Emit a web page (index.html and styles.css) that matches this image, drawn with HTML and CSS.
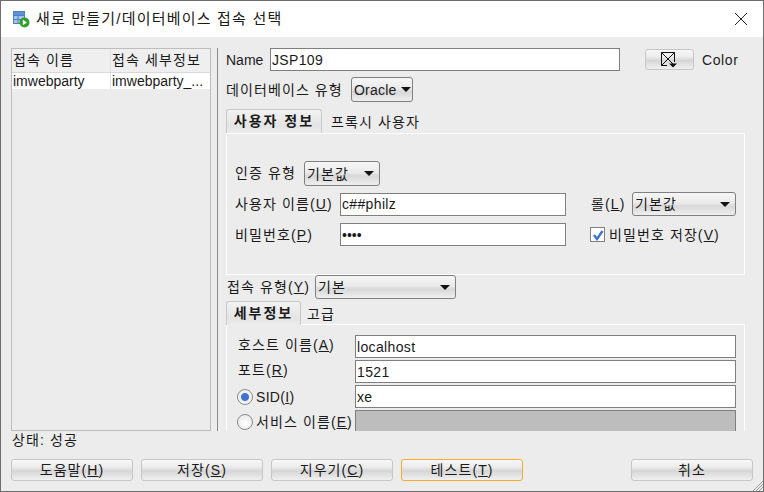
FILE: index.html
```html
<!DOCTYPE html>
<html lang="ko">
<head>
<meta charset="utf-8">
<title>새로 만들기/데이터베이스 접속 선택</title>
<link rel="stylesheet" href="styles.css">
</head>
<body>
<div class="win">
  <header class="title">
    <svg class="app-icon" width="17" height="17" viewBox="0 0 17 17">
      <rect x="0.5" y="0.5" width="11" height="12" fill="#a9c4ea" stroke="#4f7fc4"/>
      <path d="M1 4.5H11M1 8.5H11M5 4.5V12.5" stroke="#4f7fc4" fill="none"/>
      <rect x="1" y="1" width="10" height="3" fill="#5f8fd4"/>
      <circle cx="11.5" cy="11.5" r="5" fill="#2f9e2a"/>
      <path d="M9.8 8.8L14 11.5L9.8 14.2Z" fill="#fff"/>
    </svg>
    <span class="title-text">새로 만들기/데이터베이스 접속 선택</span>
    <svg class="close" width="14" height="14" viewBox="0 0 14 14"><path d="M1 1L13 13M13 1L1 13" stroke="#222" fill="none"/></svg>
  </header>

  <div class="main">
    <section class="list">
      <div class="list-head">
        <div class="cell k">접속 이름</div>
        <div class="cell k">접속 세부정보</div>
      </div>
      <div class="list-row">
        <div class="cell">imwebparty</div>
        <div class="cell">imwebparty_...</div>
      </div>
    </section>
    <div class="divider"></div>
    <section class="form">
      <div class="row row-name">
        <label class="lab lab-name">Name</label>
        <input class="field field-name" value="JSP109">
        <button class="btn btn-color">
          <svg width="18" height="18" viewBox="0 0 18 18"><path d="M0.5 1.5H13.5V11M6 14.5H0.5V1.5L13.5 14.5M13.5 1.5L0.5 14.5" stroke="#111" fill="none"/><path d="M8 12.5H16L12 16.5Z" fill="#111"/></svg>
        </button>
        <span class="lab lab-color">Color</span>
      </div>
      <div class="row row-type">
        <label class="lab k lab-type">데이터베이스 유형</label>
        <div class="sel sel-type"><span>Oracle</span><i class="arrow"></i></div>
      </div>
      <div class="tabs tabs-user">
        <div class="tab tab-user k">사용자 정보</div>
        <div class="tab-off k">프록시 사용자</div>
      </div>
      <div class="panel panel-user">
        <div class="row row-auth">
          <label class="lab k lab-auth">인증 유형</label>
          <div class="sel sel-auth"><span class="k">기본값</span><i class="arrow"></i></div>
        </div>
        <div class="row row-user">
          <label class="lab k lab-user">사용자 이름(<u>U</u>)</label>
          <input class="field field-user" value="c##philz">
          <label class="lab k lab-role">롤(<u>L</u>)</label>
          <div class="sel sel-role"><span class="k">기본값</span><i class="arrow"></i></div>
        </div>
        <div class="row row-pass">
          <label class="lab k lab-user">비밀번호(<u>P</u>)</label>
          <input class="field field-user field-pass" type="password" value="abcd">
          <span class="check">
            <svg width="12" height="12" viewBox="0 0 12 12"><path d="M2 6L5 10L10.5 2" stroke="#3f74cf" stroke-width="2.4" fill="none"/></svg>
          </span>
          <label class="lab k lab-save">비밀번호 저장(<u>V</u>)</label>
        </div>
      </div>
      <div class="row row-conn">
        <label class="lab k lab-conn">접속 유형(<u>Y</u>)</label>
        <div class="sel sel-conn"><span class="k">기본</span><i class="arrow"></i></div>
      </div>
      <div class="tabs tabs-detail">
        <div class="tab tab-detail k">세부정보</div>
        <div class="tab-off tab-off-adv k">고급</div>
      </div>
      <div class="panel panel-detail">
        <div class="row row-d">
          <label class="lab k lab-d">호스트 이름(<u>A</u>)</label>
          <input class="field field-d" value="localhost">
        </div>
        <div class="row row-d">
          <label class="lab k lab-d">포트(<u>R</u>)</label>
          <input class="field field-d" value="1521">
        </div>
        <div class="row row-d">
          <span class="radio radio-on"></span>
          <label class="lab lab-r lab-sid">SID(<u>I</u>)</label>
          <input class="field field-d" value="xe">
        </div>
        <div class="row row-d">
          <span class="radio"></span>
          <label class="lab k lab-r">서비스 이름(<u>E</u>)</label>
          <input class="field field-d field-off" disabled>
        </div>
      </div>
    </section>
  </div>

  <div class="status k">상태: 성공</div>

  <footer class="actions">
    <button class="btn btn-act k">도움말(<u>H</u>)</button>
    <button class="btn btn-act k">저장(<u>S</u>)</button>
    <button class="btn btn-act k">지우기(<u>C</u>)</button>
    <button class="btn btn-act btn-focus k">테스트(<u>T</u>)</button>
    <button class="btn btn-act btn-cancel k">취소</button>
  </footer>

  <svg class="grip" width="11" height="11" viewBox="0 0 11 11"><path d="M11 1L1 11M11 4L4 11M11 7L7 11" stroke="#9a9a9a" fill="none"/></svg>
</div>
</body>
</html>
```
FILE: styles.css
```css
* { box-sizing: border-box; }
html, body { margin: 0; padding: 0; }
body { width: 764px; height: 492px; overflow: hidden; font: 14px/16px "Liberation Sans", "Noto Sans CJK KR", sans-serif; color: #1a1a1a; }
u { text-decoration: underline; }
.k { letter-spacing: 1.1px; }

.win { position: relative; width: 764px; height: 492px; border: 1px solid #6e6e6e; background: #ececec; display: flex; flex-direction: column; overflow: hidden; }

.title { height: 36px; background: #fff; display: flex; align-items: center; padding-left: 12px; flex: none; }
.app-icon { flex: none; }
.title-text { margin-left: 6px; font-size: 15px; letter-spacing: 1.2px; color: #1a1a1a; }
.close { margin-left: auto; margin-right: 15px; }

.main { height: 394px; flex: none; display: flex; padding: 11px 0 0 10px; overflow: hidden; }

.list { width: 200px; height: 383px; border: 1px solid #bdbdbd; flex: none; }
.list-head { display: flex; height: 24px; border-bottom: 1px solid #d8d8d8; background: #efefef; }
.list-row { display: flex; height: 16px; background: #fff; }
.cell { width: 99px; padding-left: 1px; white-space: nowrap; overflow: hidden; border-right: 1px solid #e2e2e2; line-height: 16px; }
.list-head .cell { line-height: 23px; }
.cell:last-child { width: 99px; border-right: 0; }

.divider { width: 1px; height: 383px; margin-left: 6px; background: #8a8a8a; flex: none; }
.form { width: 528px; margin-left: 8px; flex: none; height: 383px; overflow: hidden; }

.row { display: flex; align-items: center; }
.lab { white-space: nowrap; flex: none; }

.field { height: 23px; border: 1px solid #7f7f7f; background: #fff; padding: 0 1px; font: 14px/16px "Liberation Sans", sans-serif; letter-spacing: 0.35px; color: #1a1a1a; border-radius: 0; outline: 0; flex: none; margin: 0; }
.field-off { background: #bdbdbd; }
.field-pass { letter-spacing: 0; }

.sel { height: 25px; display: flex; align-items: center; justify-content: space-between; padding: 0 5px 0 2px; border: 1px solid #808080; border-radius: 3px; background: linear-gradient(#f6f6f6, #eaeaea 45%, #d8d8d8 60%, #efefef); flex: none; }
.arrow { width: 0; height: 0; border-left: 5px solid transparent; border-right: 5px solid transparent; border-top: 5px solid #111; flex: none; }

.btn { display: flex; align-items: center; justify-content: center; margin: 0; padding: 0; font: 14px/16px "Liberation Sans", "Noto Sans CJK KR", sans-serif; color: #1a1a1a; border: 1px solid #c6c6c6; border-radius: 3px; background: linear-gradient(#f8f8f8, #ececec 35%, #d6d6d6 55%, #f0f0f0); }

.row-name { height: 23px; }
.lab-name { width: 44px; }
.field-name { width: 350px; }
.btn-color { width: 49px; height: 21px; margin-left: 25px; }
.lab-color { margin-left: 8px; color: #222; letter-spacing: 0.6px; }

.row-type { height: 25px; margin-top: 6px; }
.lab-type { width: 125px; }
.sel-type { width: 62px; padding-right: 1px; letter-spacing: 0.2px; }

.tabs { display: flex; align-items: flex-end; }
.tab { border: 1px solid #c8c8c8; border-bottom: 0; border-radius: 3px 3px 0 0; font-weight: 700; letter-spacing: 2px; text-align: center; background: linear-gradient(#f2f2f2, #e4e4e4 70%, #ececec); line-height: 22px; }
.tab-off { margin-left: 9px; line-height: 22px; }
.tabs-user { height: 24px; margin-top: 7px; }
.tab-user { width: 96px; height: 24px; }
.tabs-detail { height: 24px; margin-top: 2px; }
.tab-detail { width: 75px; height: 24px; }
.tab-off-adv { margin-left: 6px; }

.panel { width: 519px; border: 1px solid #fff; }
.panel-user { height: 142px; padding: 27px 0 0 8px; }
.row-auth { height: 25px; }
.lab-auth { width: 69px; padding-bottom: 2px; }
.sel-auth { width: 76px; }
.row-user { height: 24px; margin-top: 6px; }
.lab-user { width: 105px; }
.field-user { width: 226px; }
.lab-role { width: 41px; margin-left: 25px; }
.sel-role { width: 104px; height: 24px; }
.row-pass { height: 23px; margin-top: 7px; }
.check { width: 15px; height: 15px; margin-left: 24px; border: 1px solid #808080; background: #fff; display: flex; align-items: center; justify-content: center; flex: none; }
.lab-save { margin-left: 4px; }

.row-conn { height: 24px; }
.lab-conn { width: 89px; padding-left: 1px; }
.sel-conn { width: 141px; height: 24px; }

.panel-detail { height: 200px; margin-top: -1px; padding: 10px 0 0 10px; border-bottom: 0; }
.row-d { height: 23px; margin-bottom: 2px; }
.row-d .field-d { margin-left: auto; margin-right: 8px; width: 381px; }
.lab-d { padding: 0 0 4px 1px; }
.lab-r { margin-left: 3px; }
.lab-sid { letter-spacing: 0.3px; }
.radio { width: 16px; height: 16px; border: 1px solid #8a8a8a; border-radius: 50%; background: radial-gradient(circle at 50% 60%, #fff, #e4e4e4); flex: none; }
.radio-on { background: radial-gradient(circle, #3f74cf 0, #3f74cf 3.5px, #f2f2f2 4.5px); }

.status { flex: none; height: 18px; padding-left: 11px; line-height: 18px; margin-top: 0; }

.actions { flex: none; display: flex; gap: 8px; margin-top: 10px; padding-left: 10px; }
.btn-act { width: 122px; height: 22px; }
.btn-focus { border-color: #f5ae2b; }
.btn-cancel { margin-left: 100px; }

.grip { position: absolute; right: 0; bottom: 0; }
```
